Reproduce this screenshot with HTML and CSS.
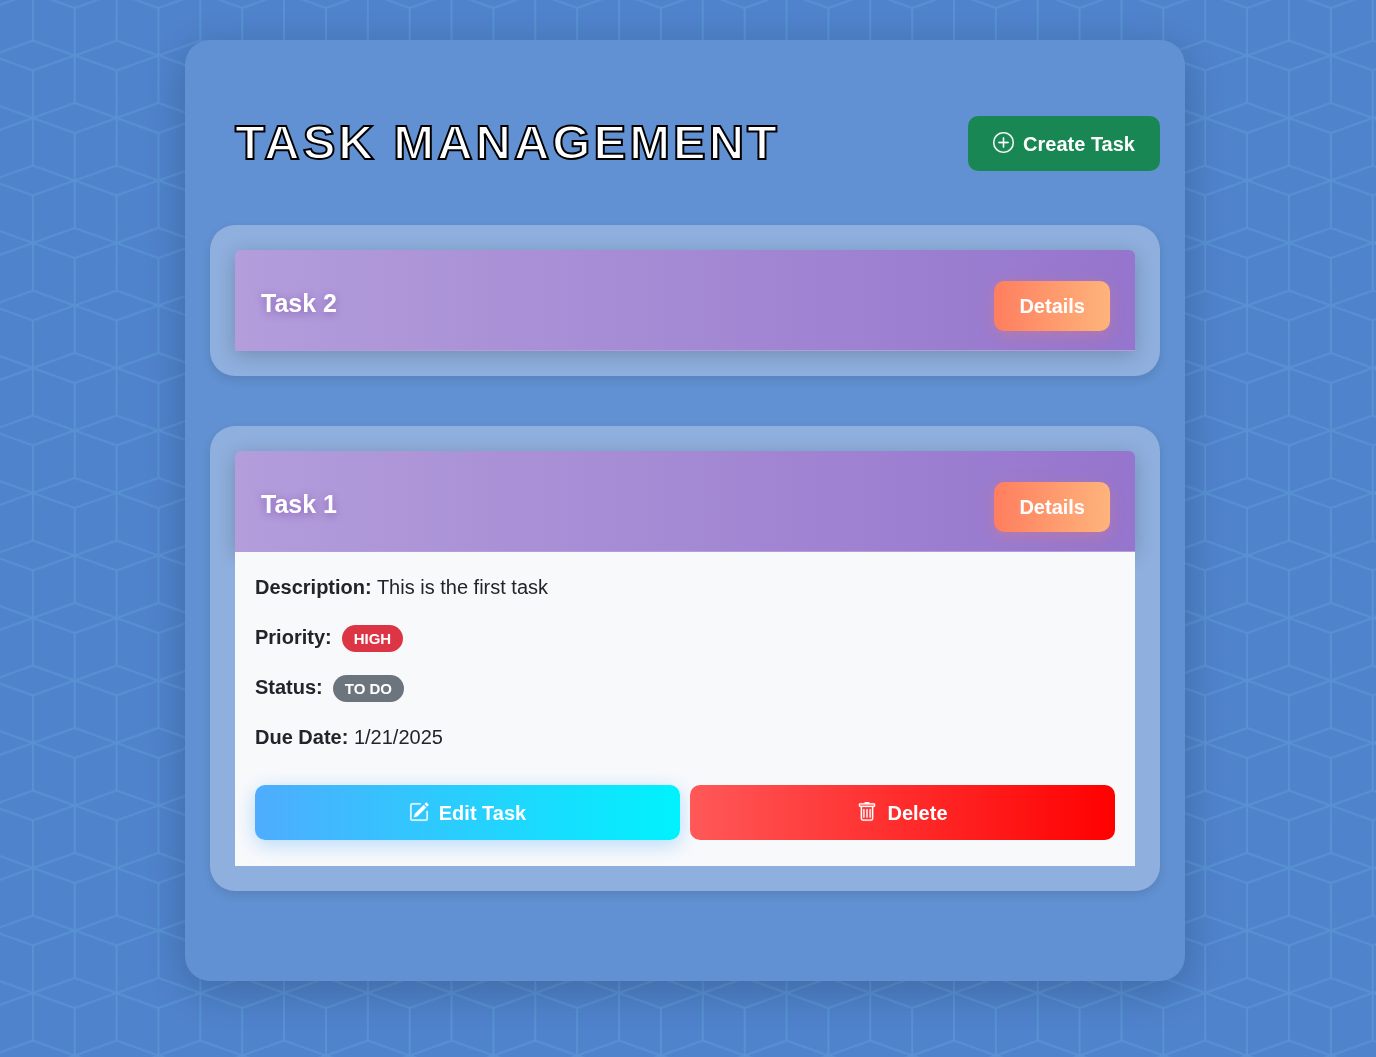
FILE: index.html
```html
<!DOCTYPE html>
<html lang="en">
<head>
  <meta charset="utf-8">
  <meta name="viewport" content="width=device-width, initial-scale=1">
  <title>Task Management</title>
  <link rel="stylesheet" href="styles.css">
</head>
<body>
  <svg class="backdrop" aria-hidden="true">
    <defs>
      <pattern id="cubes" x="-9" y="-69.5" width="83.74" height="125" patternUnits="userSpaceOnUse">
        <path d="M0 0L41.87 15L83.74 0M41.87 15V110M0 125L41.87 110L83.74 125M0 0V47.5M83.74 0V47.5M0 77.5V125M83.74 77.5V125M0 47.5L41.87 62.5L83.74 47.5M0 77.5L41.87 62.5L83.74 77.5" fill="none"/>
      </pattern>
    </defs>
    <rect width="100%" height="100%" fill="url(#cubes)" stroke="none"/>
  </svg>

  <main class="board">
    <header class="board-header">
      <h1 class="board-title">Task Management</h1>
      <button class="btn btn-create" type="button">
        <svg class="icon icon-plus" viewBox="0 0 16 16" aria-hidden="true"><path d="M8 15A7 7 0 1 1 8 1a7 7 0 0 1 0 14m0 1A8 8 0 1 0 8 0a8 8 0 0 0 0 16"/><path d="M8 4a.5.5 0 0 1 .5.5v3h3a.5.5 0 0 1 0 1h-3v3a.5.5 0 0 1-1 0v-3h-3a.5.5 0 0 1 0-1h3v-3A.5.5 0 0 1 8 4"/></svg>
        Create Task
      </button>
    </header>

    <section class="tasks">
      <article class="task">
        <header class="task-header">
          <h2 class="task-title">Task 2</h2>
          <button class="btn btn-details" type="button">Details</button>
        </header>
      </article>

      <article class="task">
        <header class="task-header">
          <h2 class="task-title">Task 1</h2>
          <button class="btn btn-details" type="button">Details</button>
        </header>
        <div class="task-body">
          <p class="field"><strong>Description:</strong> This is the first task</p>
          <p class="field field-badge"><strong>Priority:</strong> <span class="badge badge-high">HIGH</span></p>
          <p class="field field-badge"><strong>Status:</strong> <span class="badge badge-todo">TO DO</span></p>
          <p class="field"><strong>Due Date:</strong> 1/21/2025</p>
          <div class="actions">
            <button class="btn btn-edit" type="button">
              <svg class="icon" viewBox="0 0 16 16" aria-hidden="true"><path d="M15.502 1.94a.5.5 0 0 1 0 .706L14.459 3.69l-2-2L13.502.646a.5.5 0 0 1 .707 0l1.293 1.293zm-1.75 2.456-2-2L4.939 9.21a.5.5 0 0 0-.121.196l-.805 2.414a.25.25 0 0 0 .316.316l2.414-.805a.5.5 0 0 0 .196-.12l6.813-6.814z"/><path fill-rule="evenodd" d="M1 13.5A1.5 1.5 0 0 0 2.5 15h11a1.5 1.5 0 0 0 1.5-1.5v-6a.5.5 0 0 0-1 0v6a.5.5 0 0 1-.5.5h-11a.5.5 0 0 1-.5-.5v-11a.5.5 0 0 1 .5-.5H9a.5.5 0 0 0 0-1H2.5A1.5 1.5 0 0 0 1 2.5z"/></svg>
              Edit Task
            </button>
            <button class="btn btn-delete" type="button">
              <svg class="icon" viewBox="0 0 16 16" aria-hidden="true"><path d="M5.5 5.5A.5.5 0 0 1 6 6v6a.5.5 0 0 1-1 0V6a.5.5 0 0 1 .5-.5m2.5 0a.5.5 0 0 1 .5.5v6a.5.5 0 0 1-1 0V6a.5.5 0 0 1 .5-.5m3 .5a.5.5 0 0 0-1 0v6a.5.5 0 0 0 1 0z"/><path d="M14.5 3a1 1 0 0 1-1 1H13v9a2 2 0 0 1-2 2H5a2 2 0 0 1-2-2V4h-.5a1 1 0 0 1-1-1V2a1 1 0 0 1 1-1H6a1 1 0 0 1 1-1h2a1 1 0 0 1 1 1h3.5a1 1 0 0 1 1 1zM4.118 4 4 4.059V13a1 1 0 0 0 1 1h6a1 1 0 0 0 1-1V4.059L11.882 4zM2.5 3h11V2h-11z"/></svg>
              Delete
            </button>
          </div>
        </div>
      </article>
    </section>
  </main>
</body>
</html>
```
FILE: styles.css
```css
* {
  box-sizing: border-box;
}

body {
  margin: 0;
  min-height: 100vh;
  padding: 40px 6px 40px 0;
  background: #4f83cc;
  color: #212529;
  font-family: Arial, "Liberation Sans", sans-serif;
  font-size: 20px;
  line-height: 30px;
}

.backdrop {
  position: fixed;
  inset: 0;
  z-index: -1;
  width: 100%;
  height: 100%;
  stroke: #5892d3;
  stroke-width: 2;
}

.board {
  max-width: 1000px;
  margin: 0 auto;
  padding: 76px 25px 90px;
  border-radius: 25px;
  background: #6191d2;
  box-shadow: 0 10px 40px rgba(0, 0, 0, 0.2);
}

.board-header {
  display: flex;
  justify-content: space-between;
  align-items: flex-start;
  padding-left: 25px;
  margin-bottom: 54px;
}

.board-title {
  margin: 0;
  color: #fff;
  font-size: 49px;
  font-weight: 700;
  line-height: 52px;
  letter-spacing: 3px;
  text-transform: uppercase;
  -webkit-text-stroke: 2px #000;
}

.btn {
  display: flex;
  justify-content: center;
  align-items: center;
  gap: 10px;
  height: 55px;
  padding: 0 25px;
  border: 0;
  border-radius: 10px;
  color: #fff;
  font: inherit;
  font-weight: 700;
  white-space: nowrap;
  cursor: pointer;
}

.icon {
  flex: none;
  width: 20px;
  height: 20px;
  margin-bottom: 2px;
  fill: currentColor;
  stroke: currentColor;
  stroke-width: 0.2;
}

.icon-plus {
  width: 21px;
  height: 21px;
}

.btn-create {
  gap: 9px;
  background: #198754;
}

.tasks {
  display: grid;
  gap: 50px;
}

.task {
  padding: 25px;
  border-radius: 25px;
  background: #8fafde;
  box-shadow: 0 4px 10px rgba(0, 0, 0, 0.1);
}

.task-header {
  display: flex;
  justify-content: space-between;
  align-items: flex-start;
  padding: 31px 25px 19px 26px;
  border-bottom: 1px solid #b39ddb;
  border-radius: 6px 6px 0 0;
  background: linear-gradient(90deg, #b39ddb, #9575cd);
  box-shadow: 0 4px 20px rgba(0, 0, 0, 0.2);
}

.task-title {
  margin: 0;
  color: #fff;
  font-size: 25px;
  line-height: 44px;
  text-shadow: 0 2px 8px rgba(80, 20, 140, 0.4);
}

.btn-details {
  height: 50px;
  background: linear-gradient(90deg, #ff7e5f, #feb47b);
  box-shadow: 0 4px 15px rgba(255, 126, 95, 0.3);
}

.task-body {
  padding: 20px 20px 26px;
  background: #f8f9fb;
}

.field {
  margin: 0 0 20px;
}

.field-badge {
  display: flex;
  align-items: flex-end;
  gap: 10px;
}

.badge {
  padding: 0 12px;
  border-radius: 14px;
  color: #fff;
  font-size: 15px;
  font-weight: 700;
  line-height: 27px;
}

.badge-high {
  background: #dc3545;
}

.badge-todo {
  background: #6c757d;
}

.actions {
  display: grid;
  grid-template-columns: 1fr 1fr;
  gap: 10px;
  margin-top: 33px;
}

.btn-edit {
  background: linear-gradient(90deg, #4facfe, #00f2fe);
  box-shadow: 0 5px 20px rgba(79, 172, 254, 0.4);
}

.btn-delete {
  background: linear-gradient(90deg, #ff5858, #ff0000);
}

@media (max-width: 640px) {
  .board-header {
    flex-wrap: wrap;
    gap: 20px;
  }

  .actions {
    grid-template-columns: 1fr;
  }
}
```
